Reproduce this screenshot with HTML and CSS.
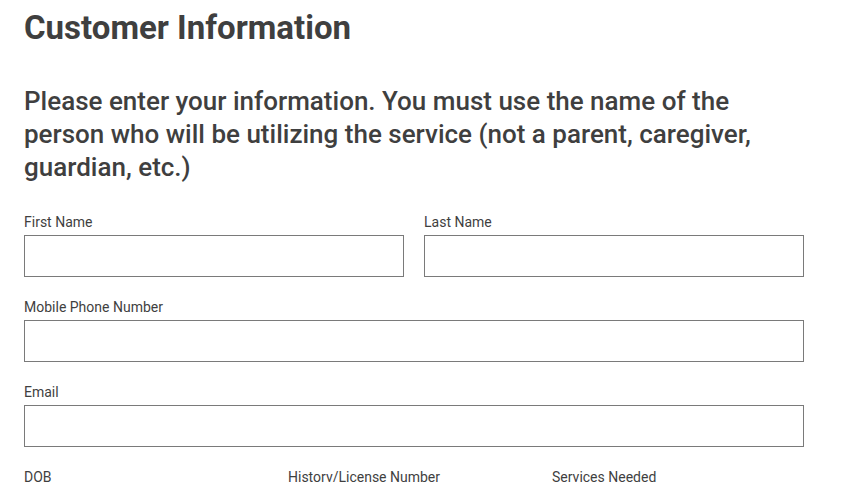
FILE: index.html
```html
<!DOCTYPE html>
<html lang="en">
<head>
    <meta charset="UTF-8">
    <meta name="viewport" content="width=device-width, initial-scale=1.0">
    <title>Customer Information</title>
    <link rel="stylesheet" href="styles.css">
</head>
<body>
    <main class="page">
        <h1 class="title">Customer Information</h1>
        <h2 class="intro">Please enter your information. You must use the name of the person who will be utilizing the service (not a parent, caregiver, guardian, etc.)</h2>
        <form class="form">
            <div class="row two">
                <label class="field">
                    <span class="label">First Name</span>
                    <input type="text" class="input">
                </label>
                <label class="field">
                    <span class="label">Last Name</span>
                    <input type="text" class="input">
                </label>
            </div>
            <div class="row">
                <label class="field">
                    <span class="label">Mobile Phone Number</span>
                    <input type="tel" class="input">
                </label>
            </div>
            <div class="row">
                <label class="field">
                    <span class="label">Email</span>
                    <input type="email" class="input">
                </label>
            </div>
            <div class="row three">
                <label class="field">
                    <span class="label">DOB</span>
                    <input type="text" class="input">
                </label>
                <label class="field">
                    <span class="label">Historv/License Number</span>
                    <input type="text" class="input">
                </label>
                <label class="field">
                    <span class="label">Services Needed</span>
                    <input type="text" class="input">
                </label>
            </div>
        </form>
    </main>
</body>
</html>
```

FILE: styles.css
```css
body {
    margin: 0;
    background: #fff;
    color: #3f3f3f;
    font-family: Roboto, "Liberation Sans", Arial, sans-serif;
}
.page {
    width: 780px;
    padding: 8px 0 0 24px;
}
.title {
    margin: 0;
    font-size: 33px;
    font-weight: 700;
    line-height: 40px;
}
.intro {
    max-width: 740px;
    margin: 37px 0 0;
    font-size: 26px;
    font-weight: 500;
    line-height: 33px;
}
.form {
    margin-top: 30px;
}
.row {
    display: grid;
    grid-template-columns: 1fr;
    gap: 20px;
    margin-bottom: 22px;
}
.row.two {
    grid-template-columns: 1fr 1fr;
}
.row.three {
    grid-template-columns: 244px 244px 244px;
}
.field {
    display: block;
}
.label {
    display: block;
    font-size: 14px;
    line-height: 16px;
    margin-bottom: 5px;
}
.input {
    display: block;
    box-sizing: border-box;
    width: 100%;
    height: 42px;
    margin: 0;
    border: 1px solid #7a7a7a;
    border-radius: 0;
    background: #fff;
    font: inherit;
    font-size: 14px;
    padding: 0 10px;
}
```
